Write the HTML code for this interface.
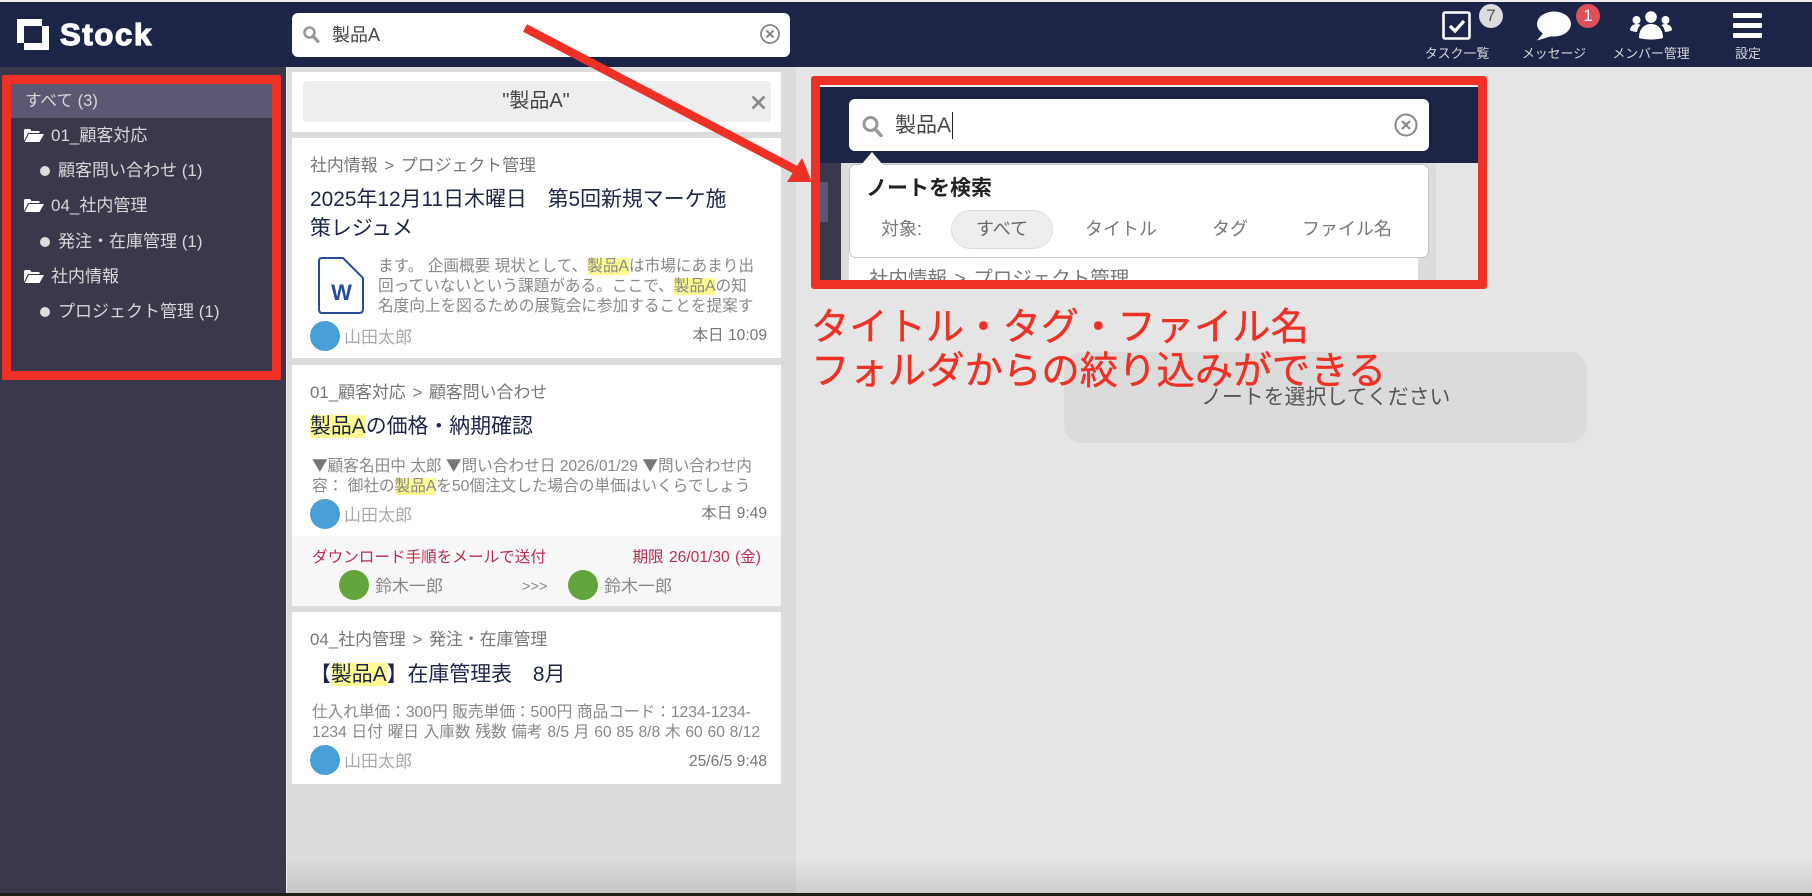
<!DOCTYPE html>
<html lang="ja"><head><meta charset="utf-8"><title>Stock</title>
<style>
html,body{margin:0;padding:0;background:#e5e5e5}
#p{position:relative;width:1812px;height:896px;overflow:hidden;background:#e5e5e5;font-family:"Liberation Sans","Noto Sans CJK JP",sans-serif}
#p div,#p svg{position:absolute}
.t{white-space:nowrap}
.card{left:292px;width:489px;background:#fff}
.bc{left:310px;font-size:16.9px;line-height:24px;color:#777;white-space:nowrap}
.gt{margin:0 2px}
.ti{left:310px;font-size:20.9px;line-height:29px;color:#1c2548;white-space:nowrap}
.ex{font-size:15.65px;line-height:19.8px;color:#888;white-space:nowrap}
.tri{font-family:"Noto Sans CJK JP",sans-serif;color:#777}
.av{width:30px;height:30px;border-radius:50%;background:#4a9fd6}
.gr{background:#63a43d}
.nm{left:344px;font-size:17px;line-height:24px;color:#aaa;white-space:nowrap}
.tm{right:1045px;font-size:15.6px;line-height:22px;color:#777;white-space:nowrap}
mark{background:#fdfb92;color:inherit}
.sb{color:#d8d8d8;font-size:17px;line-height:24px;white-space:nowrap}
.dot{left:40px;width:10px;height:10px;border-radius:50%;background:#ddd}
.lb{color:#d8d8d8;font-size:12.9px;line-height:18px;text-align:center;white-space:nowrap}
.f{font-size:18px;line-height:24px;color:#777;white-space:nowrap}
</style></head><body><div id="p">

<!-- columns -->
<div style="left:0;top:67px;width:286px;height:826px;background:#3a384b"></div>
<div style="left:286px;top:67px;width:510px;height:826px;background:#dcdcdc;border-left:1px solid #eee;box-sizing:border-box"></div>

<!-- header -->
<div style="left:0;top:0;width:1812px;height:2px;background:#eee"></div>
<div style="left:0;top:2px;width:1812px;height:65px;background:#1c2548"></div>
<svg style="left:17px;top:19px" width="32" height="31" viewBox="0 0 32 31"><path fill="#fff" fill-rule="evenodd" d="M0 0H25V7H32V31H7V24H0ZM7 7V24H25V7Z"/></svg>
<div class="t" style="left:60px;top:16px;font-size:31px;line-height:38px;font-weight:700;color:#fff;letter-spacing:1.7px;-webkit-text-stroke:1.3px #fff">Stock</div>

<div style="left:292px;top:13px;width:498px;height:44px;background:#fff;border-radius:6px"></div>
<svg style="left:302px;top:25px" width="18" height="18" viewBox="0 0 18 18"><circle cx="7.5" cy="7.5" r="5" fill="none" stroke="#999" stroke-width="2.6"/><path d="M11 11l5 5.5" stroke="#999" stroke-width="3.2" stroke-linecap="round"/></svg>
<div class="t" style="left:332px;top:22px;font-size:18px;line-height:26px;color:#444">製品A</div>
<svg style="left:759px;top:23px" width="22" height="22" viewBox="0 0 22 22"><circle cx="11" cy="11" r="9" fill="none" stroke="#888" stroke-width="1.8"/><path d="M7.5 7.5l7 7M14.5 7.5l-7 7" stroke="#888" stroke-width="2"/></svg>

<!-- header right icons -->
<svg style="left:1442px;top:11px" width="30" height="30" viewBox="0 0 30 30"><rect x="1.5" y="1.5" width="26" height="26" rx="1.5" fill="none" stroke="#fff" stroke-width="2.6"/><path d="M8 15l5 5 9-10" fill="none" stroke="#fff" stroke-width="3.2"/></svg>
<div style="left:1479px;top:4px;width:24px;height:24px;border-radius:50%;background:#dcdcdc;color:#555;font-size:17px;line-height:24px;text-align:center">7</div>
<div class="lb" style="left:1417px;top:45px;width:80px">タスク一覧</div>
<svg style="left:1536px;top:11px" width="36" height="30" viewBox="0 0 36 30"><ellipse cx="18" cy="13" rx="17" ry="12.5" fill="#fff"/><path d="M9 20L1 29.5 16 25Z" fill="#fff"/></svg>
<div style="left:1576px;top:4px;width:24px;height:24px;border-radius:50%;background:#e0505a;color:#fff;font-size:17px;line-height:24px;text-align:center">1</div>
<div class="lb" style="left:1514px;top:45px;width:80px">メッセージ</div>
<svg style="left:1630px;top:10px" width="42" height="30" viewBox="0 0 42 30" fill="#fff"><circle cx="21" cy="7" r="5.8"/><circle cx="6.500" cy="10" r="4"/><circle cx="35.500" cy="10" r="4"/><path d="M9 28c0-9 5-14 12-14s12 5 12 14c-6 2-18 2-24 0Z"/><path d="M0 20c0-3.500 3-6 7-6 1.500 0 2.500.4 3.500 1-1.800 1.800-3 4-3.500 7-3-.2-6-1-7-2Z"/><path d="M42 20c0-3.500-3-6-7-6-1.500 0-2.500.4-3.500 1 1.800 1.800 3 4 3.500 7 3-.2 6-1 7-2Z"/></svg>
<div class="lb" style="left:1601px;top:45px;width:100px">メンバー管理</div>
<div style="left:1733px;top:13px;width:29px;height:5px;background:#fff;border-radius:1px"></div>
<div style="left:1733px;top:23px;width:29px;height:5px;background:#fff;border-radius:1px"></div>
<div style="left:1733px;top:33px;width:29px;height:5px;background:#fff;border-radius:1px"></div>
<div class="lb" style="left:1708px;top:45px;width:80px">設定</div>

<!-- sidebar -->
<div style="left:11px;top:84px;width:261px;height:34px;background:#5b5873"></div>
<div class="sb" style="left:25px;top:89px;font-size:16.6px">すべて (3)</div>
<svg style="left:24px;top:129px" width="20" height="13" viewBox="0 0 20 13" fill="#fff"><path d="M0 12V1.500C0 .7.7 0 1.500 0H6l1.500 2H15.500V4H4L0 12Z"/><path d="M4.800 5H20L15.500 13H.8Z"/></svg>
<div class="sb" style="left:51px;top:124px">01_顧客対応</div>
<div class="dot" style="top:166px"></div>
<div class="sb" style="left:58px;top:159px">顧客問い合わせ (1)</div>
<svg style="left:24px;top:199px" width="20" height="13" viewBox="0 0 20 13" fill="#fff"><path d="M0 12V1.500C0 .7.7 0 1.500 0H6l1.500 2H15.500V4H4L0 12Z"/><path d="M4.800 5H20L15.500 13H.8Z"/></svg>
<div class="sb" style="left:51px;top:194px">04_社内管理</div>
<div class="dot" style="top:237px"></div>
<div class="sb" style="left:58px;top:230px">発注・在庫管理 (1)</div>
<svg style="left:24px;top:270px" width="20" height="13" viewBox="0 0 20 13" fill="#fff"><path d="M0 12V1.500C0 .7.7 0 1.500 0H6l1.500 2H15.500V4H4L0 12Z"/><path d="M4.800 5H20L15.500 13H.8Z"/></svg>
<div class="sb" style="left:51px;top:265px">社内情報</div>
<div class="dot" style="top:307px"></div>
<div class="sb" style="left:58px;top:300px">プロジェクト管理 (1)</div>

<!-- search tag -->
<div class="card" style="top:72px;height:60px"></div>
<div style="left:303px;top:81px;width:468px;height:41px;background:#eee;border-radius:4px"></div>
<div class="t" style="left:303px;top:88px;width:466px;text-align:center;font-size:20px;line-height:26px;color:#444">"製品A"</div>
<svg style="left:751px;top:95px" width="15" height="15" viewBox="0 0 15 15"><path d="M1.500 1.500l12 12M13.500 1.500l-12 12" stroke="#888" stroke-width="2.600"/></svg>

<!-- card 1 -->
<div class="card" style="top:138px;height:220px"></div>
<div class="bc" style="top:154px">社内情報<span class="gt"> &gt; </span>プロジェクト管理</div>
<div class="ti" style="top:185px">2025年12月11日木曜日　第5回新規マーケ施<br>策レジュメ</div>
<svg style="left:317px;top:256px" width="48" height="59" viewBox="0 0 48 59"><path d="M5 2H26L46 22V53Q46 57 42 57H5Q2 57 2 53V5Q2 2 5 2Z" fill="#fff" stroke="#2a4a9e" stroke-width="2"/><text x="24.500" y="44" text-anchor="middle" font-family="Liberation Sans" font-weight="700" font-size="22" fill="#2a4a9e">W</text></svg>
<div class="ex" style="left:378px;top:257px">ます。 企画概要 現状として、<mark>製品A</mark>は市場にあまり出<br>回っていないという課題がある。ここで、<mark>製品A</mark>の知<br>名度向上を図るための展覧会に参加することを提案す</div>
<div class="av" style="left:310px;top:321px"></div>
<div class="nm" style="top:326px">山田太郎</div>
<div class="tm" style="top:325px">本日 10:09</div>

<!-- card 2 -->
<div class="card" style="top:365px;height:241px"></div>
<div class="bc" style="top:381px">01_顧客対応<span class="gt"> &gt; </span>顧客問い合わせ</div>
<div class="ti" style="top:412px"><mark>製品A</mark>の価格・納期確認</div>
<div class="ex" style="left:312px;top:455px"><span class="tri">▼</span>顧客名田中 太郎 <span class="tri">▼</span>問い合わせ日 2026/01/29 <span class="tri">▼</span>問い合わせ内<br>容： 御社の<mark>製品A</mark>を50個注文した場合の単価はいくらでしょう</div>
<div class="av" style="left:310px;top:499px"></div>
<div class="nm" style="top:504px">山田太郎</div>
<div class="tm" style="top:503px">本日 9:49</div>
<div style="left:292px;top:536px;width:489px;height:70px;background:#f7f7f7"></div>
<div class="t" style="left:312px;top:547px;font-size:15.6px;line-height:22px;color:#bb2d50">ダウンロード手順をメールで送付</div>
<div class="t" style="right:1051px;top:547px;font-size:15.6px;line-height:22px;color:#bb2d50;word-spacing:1px">期限 26/01/30 (金)</div>
<div class="av gr" style="left:339px;top:570px"></div>
<div class="t" style="left:375px;top:575px;font-size:17px;line-height:24px;color:#888">鈴木一郎</div>
<div class="t" style="left:522px;top:576px;font-size:14.5px;line-height:22px;color:#888">&gt;&gt;&gt;</div>
<div class="av gr" style="left:568px;top:570px"></div>
<div class="t" style="left:604px;top:575px;font-size:17px;line-height:24px;color:#888">鈴木一郎</div>

<!-- card 3 -->
<div class="card" style="top:612px;height:172px"></div>
<div class="bc" style="top:628px">04_社内管理<span class="gt"> &gt; </span>発注・在庫管理</div>
<div class="ti" style="top:660px">【<mark>製品A</mark>】在庫管理表　8月</div>
<div class="ex" style="left:312px;top:703px;word-spacing:.4px">仕入れ単価：300円 販売単価：500円 商品コード：1234-1234-<br>1234 日付 曜日 入庫数 残数 備考 8/5 月 60 85 8/8 木 60 60 8/12</div>
<div class="av" style="left:310px;top:745px"></div>
<div class="nm" style="top:750px">山田太郎</div>
<div class="tm" style="top:751px">25/6/5 9:48</div>

<!-- note placeholder -->
<div style="left:1064px;top:352px;width:523px;height:91px;background:#dbdbdb;border-radius:18px"></div>
<div class="t" style="left:1201px;top:384px;font-size:20.9px;line-height:28px;color:#555">ノートを選択してください</div>

<!-- bottom shade -->
<div style="left:287px;top:858px;width:1525px;height:35px;background:linear-gradient(rgba(0,0,0,0),rgba(0,0,0,.1))"></div>
<div style="left:0;top:893px;width:1812px;height:3px;background:#1d2016"></div>

<!-- inset screenshot -->
<div style="left:811px;top:76px;width:676px;height:213px;overflow:hidden;background:#e5e5e5">
  <div style="left:0;top:9px;width:676px;height:2px;background:#eee"></div>
  <div style="left:0;top:11px;width:676px;height:76px;background:#1c2548"></div>
  <div style="left:8px;top:87px;width:22px;height:126px;background:#3a384b"></div>
  <div style="left:9px;top:106px;width:8px;height:40px;background:#5b5873"></div>
  <div style="left:30px;top:87px;width:595px;height:126px;background:#dcdcdc"></div>
  <div style="left:38px;top:170px;width:569px;height:43px;background:#fff"></div>
  <div class="t" style="left:58px;top:190px;font-size:19.5px;line-height:26px;color:#777">社内情報<span class="gt"> &gt; </span>プロジェクト管理</div>
  <div style="left:38px;top:23px;width:580px;height:52px;background:#fff;border-radius:6px"></div>
  <svg style="left:50px;top:39px" width="22" height="22" viewBox="0 0 22 22"><circle cx="9.500" cy="9" r="6.500" fill="none" stroke="#999" stroke-width="3"/><path d="M14 14l6 6.500" stroke="#999" stroke-width="3.500" stroke-linecap="round"/></svg>
  <div class="t" style="left:84px;top:36px;font-size:21px;line-height:28px;color:#444">製品A</div>
  <div style="left:141px;top:36px;width:1px;height:27px;background:#222"></div>
  <svg style="left:583px;top:37px" width="24" height="24" viewBox="0 0 24 24"><circle cx="12" cy="12" r="10.500" fill="none" stroke="#888" stroke-width="2"/><path d="M8 8l8 8M16 8l-8 8" stroke="#888" stroke-width="2.200"/></svg>
  <div style="left:38px;top:88px;width:580px;height:94px;background:#fff;border:1px solid #c4c4c4;border-radius:7px;box-sizing:border-box"></div>
  <svg style="left:50px;top:76px" width="22" height="14" viewBox="0 0 22 14"><path d="M11 0L22 13H0Z" fill="#fff"/></svg>
  <div class="t" style="left:55px;top:98px;font-size:21px;line-height:29px;font-weight:700;color:#222">ノートを検索</div>
  <div class="f" style="left:70px;top:141px">対象:</div>
  <div style="left:140px;top:134px;width:102px;height:39px;background:#eee;border:1px solid #ddd;border-radius:20px;box-sizing:border-box"></div>
  <div class="f" style="left:140px;top:141px;width:102px;text-align:center;color:#666">すべて</div>
  <div class="f" style="left:274px;top:141px">タイトル</div>
  <div class="f" style="left:401px;top:141px">タグ</div>
  <div class="f" style="left:491px;top:141px">ファイル名</div>
</div>

<!-- red frames -->
<div style="left:2px;top:75px;width:279px;height:305px;border:9px solid #ee3124;box-sizing:border-box;border-radius:2px"></div>
<div style="left:811px;top:76px;width:676px;height:213px;border:9px solid #ee3124;box-sizing:border-box;border-radius:3px"></div>

<!-- red annotation -->
<div class="t" style="left:811px;top:305px;font-size:38.3px;line-height:46px;color:#ee3124;-webkit-text-stroke:.4px #ee3124">タイトル・タグ・ファイル名</div>
<div class="t" style="left:811px;top:349px;font-size:38.4px;line-height:46px;color:#ee3124;-webkit-text-stroke:.4px #ee3124">フォルダからの絞り込みができる</div>

<!-- arrow -->
<svg style="left:0;top:0" width="1812" height="896" viewBox="0 0 1812 896"><path d="M525 28L796 170" stroke="#ee3124" stroke-width="8.500" fill="none"/><path d="M802 158L812 182H787Z" fill="#ee3124"/></svg>

</div></body></html>
